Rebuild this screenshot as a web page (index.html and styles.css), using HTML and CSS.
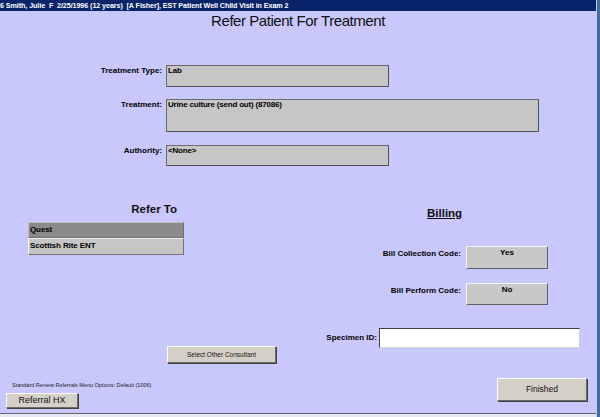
FILE: index.html
```html
<!DOCTYPE html>
<html>
<head>
<meta charset="utf-8">
<link rel="stylesheet" href="styles.css">
</head>
<body>
<div class="app">
  <div class="window">
    <div class="titlebar">6 Smith, Julie&nbsp; F&nbsp; 2/25/1996 (12 years)&nbsp; [A Fisher], EST Patient Well Child Visit in Exam 2</div>
    <h1 class="page-title">Refer Patient For Treatment</h1>

    <div class="form-grid">
      <div class="label">Treatment Type:</div>
      <div class="field field-short">Lab</div>
      <div class="label">Treatment:</div>
      <div class="field field-long">Urine culture (send out) (87086)</div>
      <div class="label">Authority:</div>
      <div class="field field-auth">&lt;None&gt;</div>
    </div>

    <div class="lower">
      <div class="refer">
        <h2 class="refer-title">Refer To</h2>
        <div class="consultants">
          <div class="consultant selected">Quest</div>
          <div class="consultant">Scottish Rite ENT</div>
        </div>
      </div>
      <div class="billing">
        <h2 class="billing-title">Billing</h2>
        <div class="bill-grid">
          <div class="bill-label">Bill Collection Code:</div>
          <div class="bill-btn bill-btn-1">Yes</div>
          <div class="bill-label">Bill Perform Code:</div>
          <div class="bill-btn">No</div>
        </div>
      </div>
    </div>

    <div class="specimen-row">
      <div class="btn consult-btn">Select Other Consultant</div>
      <div class="specimen">
        <span class="spec-label">Specimen ID:</span>
        <div class="spec-input"></div>
      </div>
    </div>

    <div class="footer-row">
      <div class="footer-left">
        <div class="footer-note">Standard Review Referrals Menu Options: Default (1006)</div>
        <div class="btn hx-btn">Referral HX</div>
      </div>
      <div class="btn finished-btn">Finished</div>
    </div>

    <div class="bottom-strip"></div>
  </div>
</div>
</body>
</html>
```

FILE: styles.css
```css
html, body {
  margin: 0;
  padding: 0;
  width: 600px;
  height: 417px;
  overflow: hidden;
}

.app {
  display: flex;
  width: 600px;
  height: 417px;
  background: #3d6ea6;
}

.window {
  width: 597px;
  height: 417px;
  box-sizing: border-box;
  border-right: 1px solid #c8c8d0;
  background: #c8c8fc;
  display: flex;
  flex-direction: column;
  font-family: "Liberation Sans", Arial, sans-serif;
  color: #000;
}

.titlebar {
  height: 11px;
  line-height: 11px;
  background: #0a246a;
  color: #fff;
  font-size: 7.2px;
  font-weight: bold;
  letter-spacing: -0.09px;
  white-space: nowrap;
  overflow: hidden;
}

.page-title {
  margin: 1px 0 0 0;
  font-size: 15px;
  line-height: 17px;
  font-weight: normal;
  letter-spacing: -0.45px;
  text-align: center;
  color: #111;
}

.form-grid {
  margin-top: 36px;
  display: grid;
  grid-template-columns: 162px max-content;
  column-gap: 4px;
  row-gap: 12px;
  font-size: 8px;
  font-weight: bold;
  line-height: 10px;
}

.label {
  text-align: right;
  padding-top: 1px;
}

.field {
  box-sizing: border-box;
  background: #c6c6c6;
  border: 1px solid #6a6a6a;
  border-right-color: #505050;
  border-bottom-color: #505050;
  padding: 0 1px;
  letter-spacing: -0.2px;
}

.field-short { width: 223px; height: 22px; }
.field-long  { width: 373px; height: 33px; margin-bottom: 1px; }
.field-auth  { width: 223px; height: 21px; }

.lower {
  display: flex;
  margin-top: 36px;
}

.refer {
  width: 184px;
  box-sizing: border-box;
  padding-left: 28px;
}

.refer-title,
.billing-title {
  margin: 0;
  font-size: 11.5px;
  line-height: 14px;
  font-weight: bold;
  color: #111;
}

.refer-title {
  text-align: right;
  padding-right: 7px;
}

.consultants {
  margin-top: 6px;
  font-size: 8px;
  font-weight: bold;
  line-height: 10px;
  letter-spacing: -0.1px;
}

.consultant {
  box-sizing: border-box;
  height: 16px;
  padding: 2px 1px 0;
  background: #c6c6c6;
  border-top: 1px solid #f4f4f4;
  border-left: 1px solid #f4f4f4;
  border-right: 1px solid #707070;
  border-bottom: 1px solid #707070;
}

.consultant + .consultant { height: 17px; }

.consultant.selected {
  background: #8a8a8a;
  border-top-color: #c0c0c0;
  border-left-color: #c0c0c0;
}

.billing {
  margin-left: 186px;
}

.billing-title {
  margin-top: 4px;
  padding-left: 57px;
  text-decoration: underline;
}

.bill-grid {
  margin-top: 26px;
  display: grid;
  grid-template-columns: 91px 82px;
  column-gap: 5px;
  row-gap: 14px;
  font-size: 8px;
  font-weight: bold;
  line-height: 10px;
}

.bill-label {
  text-align: right;
  padding-top: 3px;
}

.bill-btn {
  box-sizing: border-box;
  height: 22px;
  text-align: center;
  padding-top: 1px;
  background: #c8c8c8;
  border-top: 1px solid #f4f4f4;
  border-left: 1px solid #f4f4f4;
  border-right: 1px solid #606060;
  border-bottom: 1px solid #606060;
}

.bill-btn-1 { height: 23px; }

.specimen-row {
  display: flex;
  align-items: flex-start;
  margin-top: 23px;
}

.btn {
  box-sizing: border-box;
  background: #d4d0c8;
  border-top: 1px solid #fbfbfb;
  border-left: 1px solid #fbfbfb;
  border-right: 1px solid #6c6c6c;
  border-bottom: 1px solid #6c6c6c;
  box-shadow: 1px 1px 0 #404040;
  text-align: center;
  color: #111;
}

.consult-btn {
  margin-left: 167px;
  margin-top: 18px;
  width: 109px;
  height: 17px;
  font-size: 6.5px;
  line-height: 15px;
}

.specimen {
  margin-left: auto;
  margin-right: 16px;
  display: flex;
  align-items: center;
  gap: 2px;
}

.spec-label {
  font-size: 8px;
  font-weight: bold;
  line-height: 10px;
}

.spec-input {
  box-sizing: border-box;
  width: 201px;
  height: 20px;
  background: #fff;
  border-top: 1px solid #404040;
  border-left: 1px solid #404040;
  border-right: 1px solid #d0d0d0;
  border-bottom: 1px solid #d0d0d0;
}

.footer-row {
  display: flex;
  align-items: flex-start;
}

.footer-left {
  padding-left: 6px;
}

.footer-note {
  margin-top: 18px;
  padding-left: 6px;
  font-size: 5.5px;
  line-height: 8px;
  white-space: nowrap;
  color: #222;
}

.hx-btn {
  margin-top: 4px;
  width: 72px;
  height: 15px;
  font-size: 9px;
  line-height: 13px;
}

.finished-btn {
  margin-left: auto;
  margin-right: 9px;
  margin-top: 15px;
  width: 90px;
  height: 23px;
  font-size: 8.5px;
  line-height: 21px;
}

.bottom-strip {
  margin-top: auto;
  height: 3px;
  border-top: 1px solid #606070;
  background: #e8e8f4;
}
```
